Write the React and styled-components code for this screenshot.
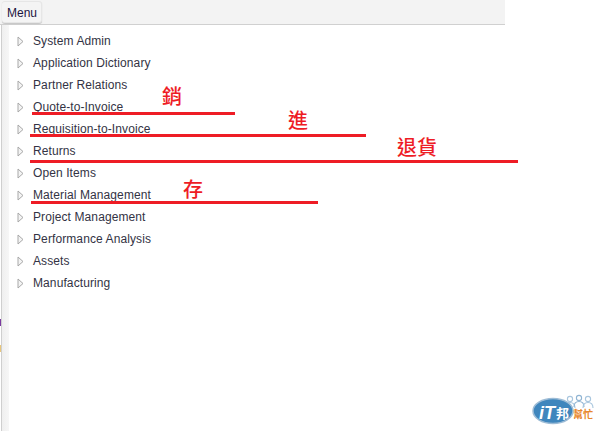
import React from 'react';
import styled, { createGlobalStyle } from 'styled-components';

const GlobalStyle = createGlobalStyle`
  html, body {
    margin: 0;
    padding: 0;
    background: #fff;
  }
  body {
    font-family: "Liberation Sans", Arial, sans-serif;
  }
`

const STPage = styled.div`
  position: relative;
  width: 600px;
  height: 431px;
  overflow: hidden;
  background: #fff;
`
const STToolbar = styled.div`
  width: 505px;
  height: 25px;
  box-sizing: border-box;
  padding: 1px 0 0 2px;
  background: #f3f3f3;
  border-bottom: 1px solid #d0d0d0;
`
const STMenuButton = styled.div`
  width: 40px;
  height: 22px;
  box-sizing: border-box;
  padding-left: 5px;
  line-height: 22px;
  font-size: 12px;
  color: #1c1440;
  background: #f4f4f4;
  border: 1px solid #e6e6e6;
  border-left-width: 0;
  border-radius: 3px;
  box-shadow: 0 1px 1px #c4c4c4;
`
const STBody = styled.div`
  display: flex;
  height: 406px;
`
const STEdge = styled.div`
  width: 1px;
  margin-left: 1px;
  flex: none;
  background: #cfcfcf;
`
const STGutter = styled.div`
  width: 7px;
  flex: none;
  background: linear-gradient(to right, #efefef, #f6f6f6);
`
const STList = styled.ul`
  list-style: none;
  margin: 0;
  padding: 5px 0 0 8px;
`
const STRow = styled.li`
  display: flex;
  align-items: center;
  height: 22px;
  font-size: 12px;
  letter-spacing: 0.1px;
  color: #333344;
`
const STArrow = styled.svg`
  width: 7px;
  height: 11px;
  margin-right: 9px;
  flex: none;
`
const STStripe = styled.span`
  position: absolute;
  left: 0;
  width: 1px;
  height: ${p => p.$height}px;
  top: ${p => p.$top}px;
  background: ${p => p.$color};
`
const STLine = styled.div`
  position: absolute;
  height: 3px;
  background: #ee1c25;
  left: ${p => p.$left}px;
  top: ${p => p.$top}px;
  width: ${p => p.$width}px;
`
const STNote = styled.div`
  position: absolute;
  font-family: "Noto Sans CJK TC", "Noto Sans CJK SC", sans-serif;
  font-size: 20px;
  font-weight: 500;
  line-height: 22px;
  white-space: nowrap;
  color: #ee1c25;
  left: ${p => p.$left}px;
  top: ${p => p.$top}px;
`
const STLogo = styled.svg`
  position: absolute;
  left: 528px;
  top: 390px;
  width: 72px;
  height: 41px;
`

const items = [
  'System Admin',
  'Application Dictionary',
  'Partner Relations',
  'Quote-to-Invoice',
  'Requisition-to-Invoice',
  'Returns',
  'Open Items',
  'Material Management',
  'Project Management',
  'Performance Analysis',
  'Assets',
  'Manufacturing'
];

const lines = [
  { left: 32, top: 112, width: 203 },
  { left: 30, top: 134, width: 336 },
  { left: 30, top: 160, width: 488 },
  { left: 31, top: 201, width: 287 }
];

const notes = [
  { text: '銷', left: 162, top: 85 },
  { text: '進', left: 288, top: 109 },
  { text: '退貨', left: 397, top: 136 },
  { text: '存', left: 183, top: 178 }
];

const Person = ({ x, y, color }) => (
  <g fill="none" stroke={color} strokeWidth="1.1">
    <circle cx={x} cy={y} r="2.6" />
    <path d={`M${x - 5} ${y + 9}c0-4 2-5.5 5-5.5s5 1.5 5 5.5`} />
  </g>
);

const Logo = () => (
  <STLogo viewBox="0 0 72 41">
    <Person x={42} y={9} color="#a9c6de" />
    <Person x={51} y={8} color="#8fb4d3" />
    <Person x={60} y={9} color="#a9c6de" />
    <ellipse cx="25" cy="21" rx="20" ry="12.5" fill="#3f86bd" stroke="#9dbcd6" strokeWidth="1.5" />
    <text x="11" y="29" fontFamily="'Liberation Sans', sans-serif" fontSize="18" fontWeight="700" fontStyle="italic" fill="#fff">iT</text>
    <text x="28" y="28" fontFamily="'Noto Sans CJK TC', sans-serif" fontSize="13" fontWeight="700" fill="#fff">邦</text>
    <text x="45" y="28" fontFamily="'Noto Sans CJK TC', sans-serif" fontSize="10" fontWeight="700" fill="#e8872c">幫忙</text>
  </STLogo>
);

const App = () => (
  <STPage>
    <GlobalStyle />
    <STToolbar>
      <STMenuButton>Menu</STMenuButton>
    </STToolbar>
    <STBody>
      <STEdge />
      <STGutter />
      <STList>
        {items.map((item) => (
          <STRow key={item}>
            <STArrow viewBox="0 0 7 11">
              <path d="M1 1l5 4.5L1 10z" fill="#f4f4f4" stroke="#a8a8a8" />
            </STArrow>
            {item}
          </STRow>
        ))}
      </STList>
    </STBody>
    <STStripe $top={319} $height={7} $color="#7b3aa0" />
    <STStripe $top={345} $height={7} $color="#e9c77c" />
    {lines.map((line) => (
      <STLine key={line.top} $left={line.left} $top={line.top} $width={line.width} />
    ))}
    {notes.map((note) => (
      <STNote key={note.text} $left={note.left} $top={note.top}>{note.text}</STNote>
    ))}
    <Logo />
  </STPage>
);

export default App;
